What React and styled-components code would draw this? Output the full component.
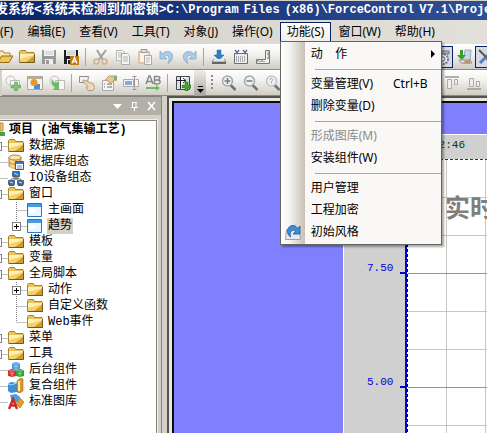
import React from "react";
import styled, { createGlobalStyle } from "styled-components";

const Global = createGlobalStyle`
  * { box-sizing: border-box; }
  body { margin: 0; background: #d4d0c8; }
  button { font: inherit; color: inherit; border: 0; background: none; padding: 0; margin: 0; }
`;

const UI_FONT = `"Noto Sans", "Noto Sans CJK SC", sans-serif`;
const SONG_FONT = `"Liberation Mono", "Noto Sans CJK SC", monospace`;

const Window = styled.div`
  height: 100vh;
  display: flex;
  flex-direction: column;
  overflow: hidden;
  background: #d4d0c8;
  font: 12px/16px ${UI_FONT};
  color: #000;
`;

const TitleBar = styled.header`
  flex: none;
  display: flex;
  justify-content: flex-start;
  gap: 5px;
  height: 20px;
  padding-left: 1px;
  margin-left: -6px;
  border-top: 1px solid #d4d0c8;
  background: linear-gradient(to right, #0a246a, #2f4f95);
  color: #fff;
  font: bold 12px/18px ${SONG_FONT};
  white-space: nowrap;
`;

const TitleLead = styled.span`
  font-size: 13px;
`;

const MenuBar = styled.nav`
  flex: none;
  display: flex;
  align-items: stretch;
  height: 24px;
  padding: 2px 0;
  margin-left: -31px;
  background: linear-gradient(to right, #d4d0c8, #e2e0da);
  white-space: nowrap;
`;

const MenuSlot = styled.div`
  position: relative;
  display: flex;
`;

const MenuButton = styled.button`
  padding: 0 6px;
  border: 1px solid ${(p) => (p.$open ? "#0a246a" : "transparent")};
  border-bottom-color: transparent;
  background: ${(p) => (p.$open ? "linear-gradient(#fff, #f0eee8)" : "none")};
`;

const Popup = styled.div`
  position: absolute;
  top: 19px;
  left: 0;
  z-index: 5;
  width: 162px;
  padding: 1px 0;
  border: 1px solid #66645e;
  background: linear-gradient(to right, #fff 0, #f6f5f2 8px, #c8c0b4 24px, #f9f8f7 24px);
  box-shadow: 2px 2px 2px rgba(0, 0, 0, 0.35);
`;

const PopupItem = styled.button`
  display: flex;
  align-items: center;
  width: 100%;
  height: 22px;
  padding-right: 5px;
  text-align: left;
  color: ${(p) => (p.disabled ? "#8d8b86" : "#000")};
`;

const PopupIcon = styled.span`
  flex: none;
  display: flex;
  justify-content: center;
  width: 25px;
  margin-right: 5px;
`;

const PopupLabel = styled.span`
  flex: 1;
  white-space: pre;
`;

const Shortcut = styled.span`
  margin-right: 8px;
`;

const PopupRule = styled.hr`
  height: 1px;
  margin: 4px 0 3px 34px;
  border: 0;
  background: #a6a6a6;
`;

const ToolBar = styled.div`
  flex: none;
  display: flex;
  align-items: center;
  height: 26px;
  margin-left: ${(p) => p.$start};
  border-bottom: 1px solid #8d8a82;
  background: linear-gradient(#fff, #f3f2ee 40%, #cfccc3);
`;

const ToolButton = styled.button`
  flex: none;
  display: flex;
  align-items: center;
  justify-content: center;
  width: 22px;
  height: 22px;
  border: 1px solid ${(p) => (p.$pressed ? "#0a246a" : "transparent")};
  background: ${(p) => (p.$pressed ? "#d6dae6" : "none")};
`;

const ToolDivider = styled.span`
  flex: none;
  width: 1px;
  height: 18px;
  margin: 0 4px 0 3px;
  background: #a9a69e;
`;

const ToolGap = styled.span`
  flex: none;
  width: 157px;
`;

const Overflow = styled.button`
  flex: none;
  display: flex;
  align-items: flex-end;
  justify-content: center;
  width: 12px;
  height: 26px;
  padding-bottom: 3px;
  border-radius: 0 4px 4px 0;
  background: linear-gradient(#eeece7, #a8a59d);
`;

const Grip = styled.span`
  flex: none;
  width: 2px;
  height: 15px;
  margin: 0 5px;
  background: repeating-linear-gradient(#8d8a82 0 2px, transparent 2px 4px);
`;

const Body = styled.main`
  flex: 1;
  min-height: 0;
  display: flex;
`;

const SidePanel = styled.aside`
  flex: none;
  display: flex;
  flex-direction: column;
  width: 162px;
  border-right: 1px solid #87857e;
  border-top: 1px solid #87857e;
`;

const PanelHead = styled.div`
  flex: none;
  display: flex;
  justify-content: flex-end;
  align-items: center;
  gap: 8px;
  height: 18px;
  padding-right: 5px;
  background: #b3b0a8;
`;

const PanelButton = styled.button`
  display: flex;
  width: 9px;
  height: 10px;
`;

const TreeBox = styled.div`
  flex: 1;
  min-height: 0;
  overflow: hidden;
  margin: 5px 4px 0 0;
  padding-top: 1px;
  border: 1px solid #87857e;
  border-left: 0;
  border-bottom: 0;
  background: #fff;
  outline: 1px solid #f1efe9;
`;

const Tree = styled.ul`
  margin: 0;
  padding: 0;
  list-style: none;
  font: 12px/16px ${SONG_FONT};
  white-space: nowrap;
`;

const TreeRow = styled.li`
  display: flex;
  align-items: center;
  height: 16px;
`;

const Guide = styled.svg`
  flex: none;
  display: block;
`;

const TreeIcon = styled.svg`
  flex: none;
  display: block;
  margin-right: 4px;
`;

const TreeLabel = styled.span`
  padding: 0 1px;
  background: ${(p) => (p.$selected ? "#d4d0c8" : "none")};
`;

const RootLabel = styled.strong`
  padding-left: 4px;
`;

const Workspace = styled.section`
  flex: 1;
  min-width: 0;
  display: flex;
  margin-left: 5px;
  border: solid #55534e;
  border-width: 2px 0 0 2px;
`;

const Sheet = styled.div`
  flex: 1;
  min-width: 0;
  display: flex;
  border: solid #e6e9dc;
  border-width: 3px 0 0 3px;
`;

const Canvas = styled.div`
  flex: 1;
  min-width: 0;
  display: flex;
  padding: 31px 0 0 169px;
  border: solid #0b0b14;
  border-width: 2px 0 0 2px;
  background: #8080ff;
`;

const TrendChart = styled.svg`
  flex: 1;
  min-width: 0;
  height: 100%;
  display: block;
  border: solid #fff;
  border-width: 1px 0 0 1px;
  background: #d0d0d0;
  font: 11px ${SONG_FONT};
`;

const Svg = ({ children, w = 16, h = 16 }) => (
  <svg width={w} height={h} viewBox={`0 0 ${w} ${h}`} aria-hidden="true">{children}</svg>
);

const folder = (
  <>
    <path d="M.5 13.5v-11l1-1h5l1 2h7.500v10z" fill="#e9c55e" stroke="#a98532" />
    <path d="M1 5h14v8H1z" fill="#f3d070" />
    <path d="M1 5h14v1L1 10z" fill="#fff0b0" />
    <path d="M7 13l8-6v6z" fill="#d19c2b" />
    <path d="M1 13.500h14.500V5" fill="none" stroke="#755720" />
  </>
);

const disk = (c, light) => (
  <>
    <path d="M1 1h14v14H1z" fill={c} />
    <path d="M3 1h10v6H3z" fill={light} />
    <path d="M4 3h8M4 5h8" stroke="#c9c9c9" />
    <path d="M4 10h8v5H4z" fill="#eee" />
    <path d="M5 11h3v4H5z" fill={c} />
  </>
);

const magnifier = (color, inner) => (
  <>
    <path d="M9 9.500l5.500 5.500" stroke="#77736c" strokeWidth="2.500" />
    <circle cx="6.500" cy="6" r="5" fill="#edf1f4" stroke={color} strokeWidth="1.500" />
    {inner}
  </>
);

const icons = {
  open: (
    <>
      <path d="M1 13V3l1-1h4l1 2h6v3" fill="#fbe9ad" stroke="#a98532" />
      <path d="M1 13.500L4.500 7H16l-4 6.500z" fill="#efc555" stroke="#8f6b1f" />
    </>
  ),
  folder,
  save: disk("#999", "#f3f3f3"),
  saveAs: (
    <>
      {disk("#1d1d26", "#e5e5e5")}
      <path d="M7 7h9v9H7z" fill="#bd7b13" />
      <path d="M9 14.500l2.500-6 2.500 6M10 12.500h3" fill="none" stroke="#fff" strokeWidth="1.300" />
    </>
  ),
  cut: (
    <>
      <path d="M4 1l5.500 9M13 1L6 10.500" stroke="#9f9f9f" strokeWidth="2" />
      <circle cx="3.500" cy="12.500" r="2.500" fill="none" stroke="#d1b187" strokeWidth="1.500" />
      <circle cx="11.500" cy="12.500" r="2.500" fill="none" stroke="#d1b187" strokeWidth="1.500" />
    </>
  ),
  copy: (
    <>
      <path d="M1.500 1.500h6l3 3v7h-9z" fill="#f5f5f5" stroke="#b7b7b7" />
      <path d="M3 4h4M3 6h4M3 8h4" stroke="#bbb" />
      <path d="M6.500 4.500h6l2 2v9h-8z" fill="#f5f5f5" stroke="#acacac" />
      <path d="M8 8h5M8 10h5M8 12h5" stroke="#b5b5b5" />
    </>
  ),
  paste: (
    <>
      <path d="M1 2h12v13H1z" fill="#e3c49d" />
      <path d="M4 .500h6v3H4z" fill="#ddd" stroke="#999" />
      <path d="M3 4h8v9H3z" fill="#faf3e9" />
      <path d="M7.500 6.500h7v9h-7z" fill="#f5f5f5" stroke="#aaa" />
      <path d="M9 9h4M9 11h4M9 13h3" stroke="#bbb" />
    </>
  ),
  undo: <path d="M1 2v8h7L5.500 7.500C8 5 12 7 9 14.500 15.500 11 15 2.500 8.500 2.500 6 2.500 4.500 3.500 3.500 5z" fill="#a9cbe6" stroke="#88aac8" strokeWidth=".8" />,
  redo: <path d="M15 2v8H8l2.500-2.500C8 5 4 7 7 14.500.500 11 1 2.500 7.500 2.500 10 2.500 11.500 3.500 12.500 5z" fill="#a9cbe6" stroke="#88aac8" strokeWidth=".8" />,
  download: (
    <>
      <path d="M6 1h4v5h3L8 11 3 6h3z" fill="#2f80c8" stroke="#1f639f" strokeWidth=".5" />
      <path d="M3 10l-2 3h14l-2-3" fill="#e7e7e7" stroke="#888" />
      <path d="M1 13h14v2H1z" fill="#66655f" />
    </>
  ),
  compile: (
    <>
      <path d="M1.500 4.500h13v10h-13z" fill="#eee" stroke="#6c6c72" />
      <path d="M3 8h10M3 10h10M3 12h10" stroke="#6c6c78" strokeDasharray="1 1" />
      <path d="M2 1l3 4M6 1L3 5M10 1l3 4M14 1l-3 4" stroke="#57709a" strokeWidth="1.300" />
    </>
  ),
  ruler: (
    <>
      <path d="M10.500 1.500h4v13h-13v-4h9z" fill="#f0f0ee" stroke="#77767a" />
      <path d="M3 13v-2M5 13v-1M7 13v-2M9 13v-1M14 9h-2M14 7h-1M14 5h-2M14 3h-1" stroke="#667" />
    </>
  ),
  gear: (
    <>
      <path d="M2 2h13v3H2z" fill="#aab2bc" stroke="#6c7785" />
      <circle cx="9" cy="10" r="5" fill="#eceff2" stroke="#717b86" strokeWidth="2" strokeDasharray="2 1" />
      <circle cx="9" cy="10" r="2" fill="#fff" stroke="#6a737e" />
    </>
  ),
  importer: (
    <>
      <path d="M9 1h6l-1 13H7z" fill="#c4d8ea" stroke="#9baabb" />
      <path d="M3 11h11l2 3H5z" fill="#e7e7e7" stroke="#8e8e8e" />
      <path d="M4 1h3v5h3l-4.500 5L1 6h3z" fill="#3f9c35" />
      <path d="M8 12l6-1v3H9z" fill="#c48f55" />
    </>
  ),
  tools: (
    <>
      <path d="M7 7l7 8" stroke="#c0392b" strokeWidth="3" />
      <path d="M14 2L2 14" stroke="#4c83bd" strokeWidth="3" />
      <path d="M1 1l7 7" stroke="#555" strokeWidth="2" />
    </>
  ),
  addShape: (
    <>
      <circle cx="5.500" cy="5.500" r="4.500" fill="#f4f4f2" stroke="#bcbcba" />
      <path d="M5.500 5.500h9v7h-9z" fill="#f7f7f5" stroke="#bbb" />
      <path d="M9.500 7h3v3h3v3h-3v3h-3v-3h-3v-3h3z" fill="#7fc474" stroke="#50974a" strokeWidth=".5" />
    </>
  ),
  picture: (
    <>
      <path d="M.500 1.500h15v13H.500z" fill="#f3f3f1" stroke="#a8a7a4" />
      <path d="M1 2h14v2H1z" fill="#c7a982" />
      <path d="M7 9h6v5H7z" fill="#478bd0" />
      <circle cx="7" cy="7.500" r="3.500" fill="#e29a2f" />
    </>
  ),
  sendShape: (
    <>
      <circle cx="5.500" cy="5.500" r="4.500" fill="#f4f4f2" stroke="#bcbcba" />
      <path d="M6.500 5.500h9v9h-9z" fill="#f7f7f5" stroke="#bbb" />
      <path d="M3 4l3 4 4-2v9H4l2-3C3 11 2 8 3 4z" fill="#70b966" />
    </>
  ),
  hand: (
    <>
      <path d="M.500 1.500h9l-1 6h-8z" fill="#f4f3f0" stroke="#8f8d88" />
      <path d="M4 5l3 .500 3 2 4 1 2 4-2 3h-5l-2-3 2-1-5-5z" fill="#ecd9b9" stroke="#b09c7c" />
    </>
  ),
  properties: (
    <>
      <path d="M1.500 5.500h11v10h-11z" fill="#f4f4f4" stroke="#aaa" />
      <path d="M3 9h1M6 9h5M3 12h1M6 12h5" stroke="#9d9d9d" strokeWidth="1.500" />
      <path d="M4 5l4-4h8v4l-4 1-2 3-3-3z" fill="#e7c796" stroke="#b89d75" />
      <path d="M13 1h3v4h-3z" fill="#7db17c" />
    </>
  ),
  textBox: (
    <>
      <path d="M.500 4.500h10v7H.500zM12.500 4.500h3v7h-3" fill="#f6f6f6" stroke="#aaa" />
      <path d="M2 6h7v4H2z" fill="#7daee0" />
      <path d="M9.500 1.500h4M9.500 14.500h4M11.500 1.500v13" stroke="#999" />
    </>
  ),
  rename: (
    <>
      <path d="M1 9l3-8h1l3 8M2 6.500h5M9.500 1v8M9.500 1.500h3q3 0 2 2-.5 1.500-2 1.500h-3h3q3 0 2.500 2.500-.5 1.500-2.500 1.500h-3" fill="none" stroke="#888" strokeWidth="1.500" />
      <path d="M1 12h10v-2l4 3-4 3v-2H1z" fill="#72b669" />
    </>
  ),
  addPanel: (
    <>
      <path d="M1.500 1.500h13v13h-13z" fill="#fff" stroke="#44464c" />
      <path d="M2 2h3v12H2zM11 2h3v12h-3z" fill="#cfe3f8" />
      <path d="M5.500 2v12M1 5.500h10M8 3l3 2.500L8 8" fill="none" stroke="#222" />
      <path d="M10 7h3v3h3v3h-3v3h-3v-3H7v-3h3z" fill="#42a529" stroke="#287218" strokeWidth=".5" />
    </>
  ),
  zoomIn: magnifier("#9eaab0", <path d="M3.500 6h6M6.500 3v6" stroke="#777" strokeWidth="1.500" />),
  zoomOut: magnifier("#9eaab0", <path d="M3.500 6h6" stroke="#777" strokeWidth="1.500" />),
  zoomReset: magnifier("#c2c5c7", <path d="M5 5q0-2 2-1.500 2 1-.500 3v2" fill="none" stroke="#aaa" />),
  alignTop: (
    <>
      <path d="M1 2h14" stroke="#999" strokeWidth="1.500" />
      <path d="M3.500 4.500h4v9h-4zM10.500 4.500h3v5h-3z" fill="#eee" stroke="#aaa" />
    </>
  ),
  alignBottom: (
    <>
      <path d="M1 14h14" stroke="#999" strokeWidth="1.500" />
      <path d="M3.500 3.500h4v8h-4zM10.500 6.500h3v5h-3z" fill="#eee" stroke="#aaa" />
    </>
  ),
  window: (
    <>
      <path d="M.500 1.500h14v13H.500z" fill="#edf7ff" stroke="#2877c2" />
      <path d="M1 2h13v3H1z" fill="#4a9be2" />
      <path d="M3 8h5M3 10h4" stroke="#fff" strokeWidth="2" />
    </>
  ),
  database: (
    <>
      <path d="M1 3v9c2 3 10 3 12 0V3z" fill="#efc36a" stroke="#bb8336" />
      <path d="M3 5v9M5 5.500v9" stroke="#fbe6b4" />
      <ellipse cx="7" cy="3.500" rx="6" ry="2.500" fill="#fae6ac" stroke="#bb8336" />
      <path d="M1 8c2 3 10 3 12 0" fill="none" stroke="#bb8336" />
      <path d="M7.500 7.500h8v8h-8z" fill="#fff" stroke="#34599a" />
      <path d="M8 8h7v2H8z" fill="#3f77ca" />
      <path d="M9 12h5M9 14h5" stroke="#7389b5" />
    </>
  ),
  network: (
    <>
      <path d="M8 6v4M3 12V9h10v3" fill="none" stroke="#777" />
      <path d="M4.500 1.500h7v5h-7zM.500 10.500h6v4h-6zM9.500 10.500h6v4h-6z" fill="#2474c4" stroke="#50647c" />
      <path d="M6 3l4 2M2 12l3 1M11 12l3 1" stroke="#b7e1ff" />
      <path d="M5 8h6M1 15.500h5M10 15.500h5" stroke="#555" />
    </>
  ),
  blocks: (
    <>
      <path d="M4 1l4-1 4 1v6l-4 1-4-1z" fill="#4c9fe3" />
      <path d="M0 8l4-1 4 1v6l-4 1-4-1z" fill="#d93131" />
      <path d="M8 8l4-1 4 1v6l-4 1-4-1z" fill="#31a532" />
      <path d="M4 1l4 1 4-1M0 8l4 1 4-1 4 1 4-1" fill="none" stroke="#fff" strokeOpacity=".4" />
      <path d="M6 4h4M8 4v3M2 11h4M4 11v3M10 11h4M12 11v3" stroke="#fff" strokeOpacity=".5" />
    </>
  ),
  composite: (
    <>
      <path d="M0 6l3-2 6 1v9l-6 1-3-2z" fill="#3d8fd8" />
      <path d="M0 6l3 1 6-2" fill="none" stroke="#a5d5ff" />
      <path d="M9 3q3-4 6-2v12q-3 3-6 1z" fill="#d99b2f" stroke="#9b651a" strokeWidth=".6" />
      <path d="M11 3v10" stroke="#ffe7a5" strokeWidth="2" />
    </>
  ),
  gallery: (
    <>
      <path d="M2 1l6-1 4 3-1 5-7 1z" fill="#4c9ce1" />
      <path d="M12 4l4 4-4 6-4-4z" fill="#e39e28" stroke="#a8691b" strokeWidth=".6" />
      <path d="M1 15L5 5l4 10M2.500 11.500h5" fill="none" stroke="#cc2920" strokeWidth="2.500" />
    </>
  ),
  restyle: (
    <>
      <path d="M1.500 5.500h13l1 10H.500z" fill="#e6eaed" stroke="#9ca3a9" />
      <path d="M15 2v8H8l2.500-2.500C8 4.500 4 7 5.500 13 .500 9.500 2 1.500 8 1.500c2.500 0 4 1.500 4.500 3z" fill="#3e8edb" stroke="#21578f" strokeWidth=".8" />
    </>
  ),
};

const toolRow1 = [
  ["打开", "open"], ["文件夹", "folder"], ["保存", "save"], ["另存为", "saveAs"], null,
  ["剪切", "cut"], ["复制", "copy"], ["粘贴", "paste"], ["撤销", "undo"], ["重做", "redo"], null,
  ["下载", "download"], ["编译", "compile"], ["标尺", "ruler"], "gap",
  ["设置", "gear", true], ["导入", "importer"], ["工具", "tools", true],
];

const toolRow2 = [
  ["添加图形", "addShape"], ["图片", "picture"], ["发送图形", "sendShape"], null,
  ["选择", "hand"], ["属性", "properties"], ["文本框", "textBox"], ["重命名", "rename"], null,
  ["添加面板", "addPanel"], "overflow",
  ["放大", "zoomIn"], ["缩小", "zoomOut"], ["还原", "zoomReset"], "gap",
  ["顶端对齐", "alignTop"], ["底端对齐", "alignBottom"],
];

function Tools({ items }) {
  return items.map((item, i) => {
    if (item === null) return <ToolDivider key={i} />;
    if (item === "gap") return <ToolGap key={i} />;
    if (item === "overflow") {
      return (
        <React.Fragment key={i}>
          <Overflow aria-label="更多按钮">
            <Svg w={7} h={8}><path d="M1 1.500h5" stroke="#000" /><path d="M0 4h7L3.500 8z" fill="#000" /></Svg>
          </Overflow>
          <Grip />
        </React.Fragment>
      );
    }
    const [name, icon, pressed] = item;
    return (
      <ToolButton key={i} aria-label={name} $pressed={pressed}><Svg>{icons[icon]}</Svg></ToolButton>
    );
  });
}

const menus = ["文件(F)", "编辑(E)", "查看(V)", "工具(T)", "对象(J)", "操作(O)", "功能(S)", "窗口(W)", "帮助(H)"];

const popupItems = [
  { label: "动    作", submenu: true },
  null,
  { label: "变量管理(V)", shortcut: "Ctrl+B" },
  { label: "删除变量(D)" },
  null,
  { label: "形成图库(M)", disabled: true },
  { label: "安装组件(W)" },
  null,
  { label: "用户管理" },
  { label: "工程加密" },
  { label: "初始风格", icon: "restyle" },
];

function FunctionMenu() {
  return (
    <Popup role="menu">
      {popupItems.map((item, i) =>
        item === null ? (
          <PopupRule key={i} />
        ) : (
          <PopupItem key={i} role="menuitem" disabled={item.disabled}>
            <PopupIcon>{item.icon && <Svg>{icons[item.icon]}</Svg>}</PopupIcon>
            <PopupLabel>{item.label}</PopupLabel>
            {item.shortcut && <Shortcut>{item.shortcut}</Shortcut>}
            {item.submenu && <Svg w={5} h={8}><path d="M0 0l4 4-4 4z" /></Svg>}
          </PopupItem>
        )
      )}
    </Popup>
  );
}

const treeRows = [
  { label: "数据源", icon: "folder", box: "plus" },
  { label: "数据库组态", icon: "database" },
  { label: "IO设备组态", icon: "network" },
  { label: "窗口", icon: "folder", box: "minus" },
  { label: "主画面", icon: "window", nested: true },
  { label: "趋势", icon: "window", nested: true, box: "plus", selected: true, last: true },
  { label: "模板", icon: "folder", box: "plus" },
  { label: "变量", icon: "folder", box: "plus" },
  { label: "全局脚本", icon: "folder", box: "minus" },
  { label: "动作", icon: "folder", nested: true, box: "plus" },
  { label: "自定义函数", icon: "folder", nested: true },
  { label: "Web事件", icon: "folder", nested: true, last: true },
  { label: "菜单", icon: "folder", box: "plus" },
  { label: "工具", icon: "folder", box: "plus" },
  { label: "后台组件", icon: "blocks" },
  { label: "复合组件", icon: "composite" },
  { label: "标准图库", icon: "gallery" },
];

function TreeGuide({ nested, box, last }) {
  const cx = nested ? 16 : -3;
  const width = nested ? 27 : 8;
  return (
    <Guide width={width} height="16" aria-hidden="true">
      <path
        d={`M${cx + 0.5} 8.500H${width}${nested ? `M${cx + 0.5} 0V${last ? 8 : 16}` : ""}`}
        stroke="#808080" strokeDasharray="1 1" fill="none"
      />
      {box && (
        <>
          <rect x={cx - 3.5} y="4.500" width="8" height="8" fill="#fff" stroke="#808080" />
          <path d={`M${cx - 2} 8.500h5${nested ? `M${cx + 0.5} 6v5` : ""}`} stroke="#000" />
        </>
      )}
    </Guide>
  );
}

function ProjectTree() {
  return (
    <Tree>
      <TreeRow>
        <Guide width="5" height="16" aria-hidden="true">
          <path d="M0 1h3v8H0z" fill="#f2c979" stroke="#b58a3e" />
          <path d="M0 10h5v4H0z" fill="#43a243" />
        </Guide>
        <RootLabel>项目 (油气集输工艺)</RootLabel>
      </TreeRow>
      {treeRows.map((row) => (
        <TreeRow key={row.label}>
          <TreeGuide nested={row.nested} box={row.box} last={row.last} />
          <TreeIcon width="16" height="16" viewBox="0 0 16 16" aria-hidden="true">{icons[row.icon]}</TreeIcon>
          <TreeLabel $selected={row.selected}>{row.label}</TreeLabel>
        </TreeRow>
      ))}
    </Tree>
  );
}

const gridLines = [38, 76, 114, 152, 190, 228, 266];
const axisLabels = [{ y: 114, text: "7.50" }, { y: 228, text: "5.00" }];

function Trend() {
  return (
    <TrendChart role="img" aria-label="实时趋势">
      <text x="88" y="13" fill="#003c00">12:46</text>
      <svg x="61" y="24" width="100%" height="100%">
        <rect x="2" width="100%" height="100%" fill="#fff" />
        <path d="M41.500 0v400M80.500 0v400" stroke="#c9c6c0" />
        {gridLines.map((y) => (
          <path key={y} d={`M3 ${y + 0.5}h900`} stroke={y % 114 ? "#c9c6c0" : "#99968f"} />
        ))}
        <path d="M0 .500h900" stroke="#fff" />
        <path d="M0 .500h900" stroke="#333" strokeDasharray="3 2" />
        <path d="M1 0v400" stroke="#0000d0" strokeWidth="2" />
        <path d="M2.500 0v400" stroke="#000" strokeDasharray="3 2" />
        <text x="40" y="58" fill="#807e7a" fontSize="25" fontWeight="700">实时</text>
      </svg>
      {axisLabels.map(({ y, text }) => (
        <g key={y}>
          <text x="23" y={y + 22} fill="#0000d0">{text}</text>
          <path d={`M56 ${y + 24}h6`} stroke="#0000d0" strokeWidth="2" />
        </g>
      ))}
    </TrendChart>
  );
}

export default function App() {
  return (
    <Window>
      <Global />
      <TitleBar>
        <span><TitleLead>发系统&lt;系统未检测到加密锁&gt;</TitleLead>C:\Program</span>
        <span>Files</span>
        <span>(x86)\ForceControl</span>
        <span>V7.1\Proje</span>
      </TitleBar>
      <MenuBar>
        {menus.map((label) => {
          const open = label === "功能(S)";
          return (
            <MenuSlot key={label}>
              <MenuButton $open={open} aria-expanded={open}>{label}</MenuButton>
              {open && <FunctionMenu />}
            </MenuSlot>
          );
        })}
      </MenuBar>
      <ToolBar $start="-6px"><Tools items={toolRow1} /></ToolBar>
      <ToolBar $start="2px"><Tools items={toolRow2} /></ToolBar>
      <Body>
        <SidePanel>
          <PanelHead>
            <PanelButton aria-label="选项"><Svg w={9} h={10}><path d="M0 3h9L4.500 8z" fill="#fff" /></Svg></PanelButton>
            <PanelButton aria-label="固定"><Svg w={9} h={10}><path d="M2.500 1v5M6 1v5M2 1.500h5M1 6.500h7M4.500 7v3" stroke="#fff" fill="none" /></Svg></PanelButton>
            <PanelButton aria-label="关闭"><Svg w={9} h={10}><path d="M1 1l7 8M8 1L1 9" stroke="#fff" strokeWidth="1.500" /></Svg></PanelButton>
          </PanelHead>
          <TreeBox><ProjectTree /></TreeBox>
        </SidePanel>
        <Workspace><Sheet><Canvas><Trend /></Canvas></Sheet></Workspace>
      </Body>
    </Window>
  );
}
